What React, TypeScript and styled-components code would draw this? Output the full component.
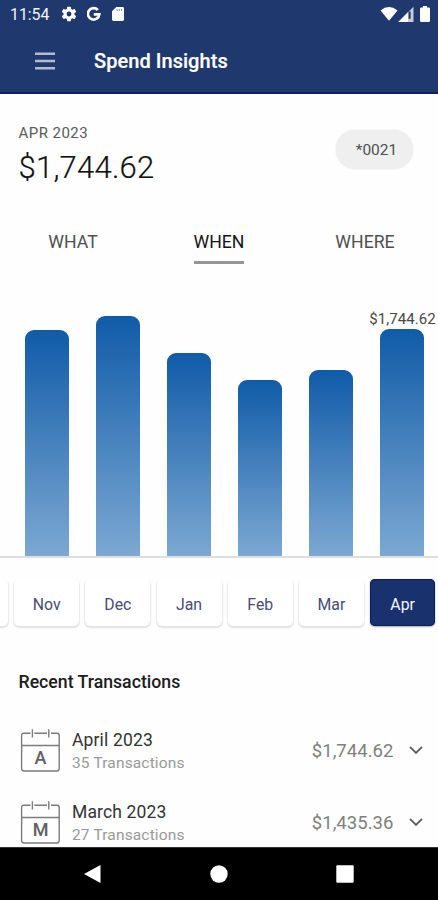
import React from "react";
import styled, { createGlobalStyle } from "styled-components";

const GlobalStyle = createGlobalStyle`
  * { box-sizing: border-box; }
  html, body { margin: 0; padding: 0; }
  body { font-family: Roboto, "Liberation Sans", sans-serif; background: #fff; }
  button { font-family: inherit; border: 0; padding: 0; background: none; }
  svg { display: block; flex: none; }
`;

const Screen = styled.div`
  width: 438px;
  height: 900px;
  overflow: hidden;
  display: flex;
  flex-direction: column;
  background: #fefefe;
`;

const Header = styled.header`
  flex: none;
  height: 94px;
  background: #1f386d;
  border-bottom: 2px solid #101f62;
  color: #fff;
`;

const StatusBar = styled.div`
  height: 29px;
  padding: 0 8px 0 10px;
  display: flex;
  align-items: center;
`;

const Clock = styled.span`
  width: 51px;
  font-size: 15.8px;
  line-height: 29px;
  color: #f3f4fa;
`;

const StatusIcons = styled.div`
  display: flex;
  align-items: center;
  gap: 10px;
  margin-top: -1px;
`;

const SignalIcons = styled.div`
  margin-left: auto;
  margin-top: -2px;
  display: flex;
  align-items: center;
`;

const SignalGap = styled.span`
  width: 6px;
`;

const AppBar = styled.div`
  height: 64px;
  padding-left: 35px;
  display: flex;
  align-items: center;
`;

const MenuButton = styled.button`
  width: 20px;
  height: 18px;
  margin-right: 39px;
`;

const Title = styled.h1`
  margin: 0;
  font-size: 20px;
  line-height: 26px;
  font-weight: 500;
  letter-spacing: 0.05px;
  -webkit-text-stroke: 0.2px #fff;
`;

const Main = styled.main`
  flex: 1;
  min-height: 0;
  overflow: hidden;
`;

const Summary = styled.section`
  height: 130px;
  padding: 29px 25px 0 18.5px;
  display: flex;
  justify-content: space-between;
`;

const Period = styled.div`
  font-size: 15px;
  line-height: 20px;
  letter-spacing: 0.45px;
  color: #5a5a5a;
`;

const Total = styled.div`
  margin-top: 6px;
  font-size: 31px;
  line-height: 38px;
  letter-spacing: 0.25px;
  font-weight: 300;
  color: #111;
  -webkit-text-stroke: 0.2px #111;
`;

const AccountChip = styled.button`
  width: 77px;
  height: 39px;
  margin-top: 7px;
  padding-left: 4px;
  border-radius: 20px;
  background: #efefef;
  box-shadow: 0 0 2px #e4e4e4;
  font-size: 15.5px;
  color: #505050;
`;

const Tabs = styled.nav`
  height: 40px;
  display: grid;
  grid-template-columns: repeat(3, 146px);
  justify-items: center;
  align-items: start;
`;

const Tab = styled.button<{ $active?: boolean }>`
  height: 40px;
  padding-top: 2px;
  padding-bottom: 3px;
  border-bottom: 3px solid ${(p) => (p.$active ? "#959595" : "transparent")};
  font-size: 17.7px;
  line-height: 32px;
  color: ${(p) => (p.$active ? "#151515" : "#505050")};
`;

const Chart = styled.section`
  height: 294px;
  padding-left: 25px;
  border-bottom: 2px solid #dedede;
  display: flex;
  align-items: flex-end;
  gap: 27.1px;
`;

const BarColumn = styled.div`
  flex: none;
  width: 44px;
  display: flex;
  flex-direction: column;
  align-items: center;
`;

const BarValue = styled.span`
  font-size: 15px;
  line-height: 20px;
  height: 20px;
  letter-spacing: 0.05px;
  white-space: nowrap;
  color: #484848;
`;

const Bar = styled.div`
  width: 100%;
  border-radius: 9px 9px 0 0;
  background: linear-gradient(#105ba8, #7ca8d2);
`;

const Months = styled.div`
  height: 92px;
  padding-top: 21px;
  display: flex;
  gap: 6.2px;
  margin-left: -57px;
`;

const Month = styled.button<{ $active?: boolean }>`
  flex: none;
  width: 65px;
  height: 47px;
  padding-top: 3px;
  border-radius: 5px;
  font-size: 15.8px;
  color: ${(p) => (p.$active ? "#f5f6ff" : "#474c76")};
  background: ${(p) => (p.$active ? "#19316d" : "#fff")};
  box-shadow: ${(p) =>
    p.$active
      ? "inset 0 0 0 1px #0b1c5b, 0 1px 2px #aaa"
      : "0 2px 2px #e2e2e2, 1px 1px 1px #eee, -1px 1px 1px #eee"};
  clip-path: ${(p) => (p.$active ? "none" : "inset(0 -4px -6px -4px)")};
`;

const SectionTitle = styled.h2`
  margin: 19px 0 0 18.5px;
  font-size: 17.7px;
  line-height: 26px;
  font-weight: 500;
  color: #1c1c1c;
`;

const Transactions = styled.ul`
  list-style: none;
  margin: 20px 0 0;
  padding: 0 15px 0 19px;
`;

const TransactionRow = styled.li`
  height: 72px;
  display: flex;
  align-items: center;
`;

const Details = styled.div`
  margin-left: 12px;
  margin-top: 1px;
  flex: 1;
`;

const MonthName = styled.div`
  font-size: 17.5px;
  line-height: 23px;
  letter-spacing: 0.15px;
  color: #333;
`;

const Count = styled.div`
  font-size: 15.5px;
  line-height: 22px;
  letter-spacing: 0.15px;
  color: #999;
`;

const Amount = styled.span`
  font-size: 18.5px;
  color: #808080;
  margin-right: 15.5px;
  letter-spacing: 0.05px;
`;

const NavBar = styled.footer`
  flex: none;
  height: 53px;
  padding: 0 84px;
  background: #000;
  border-top: 1px solid #333;
  display: flex;
  justify-content: space-between;
  align-items: center;
`;

const bars = [
  { id: "nov", height: 226 },
  { id: "dec", height: 240 },
  { id: "jan", height: 203.5 },
  { id: "feb", height: 176 },
  { id: "mar", height: 186.5 },
  { id: "apr", height: 227, label: "$1,744.62" },
];

const months = ["", "Nov", "Dec", "Jan", "Feb", "Mar", "Apr"];

const transactions = [
  { name: "April 2023", count: "35 Transactions", amount: "$1,744.62" },
  { name: "March 2023", count: "27 Transactions", amount: "$1,435.36" },
];

const GearIcon = () => (
  <svg width="16" height="16" viewBox="1.5 1.5 21 21" fill="#fff">
    <path d="M19.14 12.94c.04-.3.06-.61.06-.94s-.02-.64-.07-.94l2.03-1.58a.49.49 0 0 0 .12-.61l-1.92-3.32a.49.49 0 0 0-.59-.22l-2.39.96c-.5-.38-1.03-.7-1.62-.94l-.36-2.54a.48.48 0 0 0-.48-.41h-3.84a.47.47 0 0 0-.47.41l-.36 2.54c-.59.24-1.13.57-1.62.94l-2.39-.96a.48.48 0 0 0-.59.22L2.74 8.87a.48.48 0 0 0 .12.61l2.03 1.58c-.05.3-.09.63-.09.94s.02.64.07.94l-2.03 1.58a.49.49 0 0 0-.12.61l1.92 3.32c.12.22.37.29.59.22l2.39-.96c.5.38 1.03.7 1.62.94l.36 2.54c.05.24.24.41.48.41h3.84c.24 0 .44-.17.47-.41l.36-2.54c.59-.24 1.13-.56 1.62-.94l2.39.96c.22.08.47 0 .59-.22l1.92-3.32a.47.47 0 0 0-.12-.61zM12 15.2A3.2 3.2 0 1 1 12 8.8a3.2 3.2 0 0 1 0 6.4z" />
  </svg>
);

const GoogleIcon = () => (
  <svg width="14" height="16" viewBox="0 0 14 16" fill="none" stroke="#fff" strokeWidth="2.7">
    <path d="M10.8 4A5.7 5.7 0 1 0 12.3 8.4H6.8" />
  </svg>
);

const SdIcon = () => (
  <svg width="13" height="16" viewBox="-1 0 13 16">
    <path d="M4.3 1H10.6Q12 1 12 2.4V13.6Q12 15 10.6 15H1.4Q0 15 0 13.6V5.3Z" fill="#fff" />
    <path d="M5 3V5M7.3 3V5M9.6 3V5" stroke="#8290b4" strokeWidth="1" />
  </svg>
);

const WifiIcon = () => (
  <svg width="18" height="16" viewBox="0 0 18 16">
    <path d="M0.5 4.4Q9-2.4 17.5 4.4L9 14.8Z" fill="#fff" />
  </svg>
);

const CellIcon = () => (
  <svg width="16" height="16" viewBox="0 0 16 16">
    <path d="M15.5 .8V16H.3Z" fill="#c6cbda" />
    <path d="M10 6.2V16H.3Z" fill="#fff" />
    <path d="M11.6 5.5V12.8" stroke="#1f386d" strokeWidth="2" />
  </svg>
);

const BatteryIcon = () => (
  <svg width="10" height="16" viewBox="0 0 10 16">
    <path d="M3 0H7V1.6H8.8Q10 1.6 10 2.8V14.8Q10 16 8.8 16H1.2Q0 16 0 14.8V2.8Q0 1.6 1.2 1.6H3Z" fill="#fff" />
  </svg>
);

const MenuIcon = () => (
  <svg width="20" height="18" viewBox="0 0 20 18" stroke="#b4bad2" strokeWidth="2.5">
    <path d="M0 1.7H20M0 9H20M0 16.2H20" />
  </svg>
);

const CalendarLetter = styled.text`
  font-size: 18px;
  font-weight: 500;
  text-anchor: middle;
  fill: #606060;
`;

const CalendarIcon = ({ letter }: { letter: string }) => (
  <svg width="41" height="44" viewBox="0 0 41 44">
    <g fill="none" stroke="#7c7c7c" strokeWidth="1.4">
      <path d="M11.5 4.2H5Q2.6 4.2 2.6 6.6V39.6Q2.6 42 5 42H38Q40.2 42 40.2 39.6V6.6Q40.2 4.2 38 4.2H32M15.3 4.2H28M2.6 16.5H40.2" />
      <path d="M13.4 .2V8.6M29.8 .2V8.6" />
    </g>
    <CalendarLetter x="21.5" y="35.3">{letter}</CalendarLetter>
  </svg>
);

const Chevron = styled.svg`
  margin-top: -3px;
`;

const ChevronIcon = () => (
  <Chevron width="14" height="10" viewBox="0 0 14 10" fill="none" stroke="#606060" strokeWidth="1.9">
    <path d="M1 1.8L7 7.8L13 1.8" />
  </Chevron>
);

export default function App() {
  return (
    <>
      <GlobalStyle />
      <Screen>
        <Header>
          <StatusBar>
            <Clock>11:54</Clock>
            <StatusIcons>
              <GearIcon />
              <GoogleIcon />
              <SdIcon />
            </StatusIcons>
            <SignalIcons>
              <WifiIcon />
              <CellIcon />
              <SignalGap />
              <BatteryIcon />
            </SignalIcons>
          </StatusBar>
          <AppBar>
            <MenuButton aria-label="Menu">
              <MenuIcon />
            </MenuButton>
            <Title>Spend Insights</Title>
          </AppBar>
        </Header>
        <Main>
          <Summary>
            <div>
              <Period>APR 2023</Period>
              <Total>$1,744.62</Total>
            </div>
            <AccountChip>*0021</AccountChip>
          </Summary>
          <Tabs>
            <Tab>WHAT</Tab>
            <Tab $active>WHEN</Tab>
            <Tab>WHERE</Tab>
          </Tabs>
          <Chart>
            {bars.map((bar) => (
              <BarColumn key={bar.id}>
                {bar.label && <BarValue>{bar.label}</BarValue>}
                <Bar style={{ height: bar.height }} />
              </BarColumn>
            ))}
          </Chart>
          <Months>
            {months.map((month) => (
              <Month key={month} $active={month === "Apr"}>
                {month}
              </Month>
            ))}
          </Months>
          <SectionTitle>Recent Transactions</SectionTitle>
          <Transactions>
            {transactions.map((t) => (
              <TransactionRow key={t.name}>
                <CalendarIcon letter={t.name[0]} />
                <Details>
                  <MonthName>{t.name}</MonthName>
                  <Count>{t.count}</Count>
                </Details>
                <Amount>{t.amount}</Amount>
                <ChevronIcon />
              </TransactionRow>
            ))}
          </Transactions>
        </Main>
        <NavBar>
          <svg width="17" height="18" viewBox="0 0 17 18" fill="#fff">
            <path d="M16.5 0V18L0 9Z" />
          </svg>
          <svg width="18" height="18" viewBox="0 0 18 18" fill="#fff">
            <circle cx="9" cy="9" r="8.7" />
          </svg>
          <svg width="18" height="18" viewBox="0 0 18 18" fill="#fff">
            <rect x=".3" y=".3" width="17.4" height="17.4" rx="1" />
          </svg>
        </NavBar>
      </Screen>
    </>
  );
}
